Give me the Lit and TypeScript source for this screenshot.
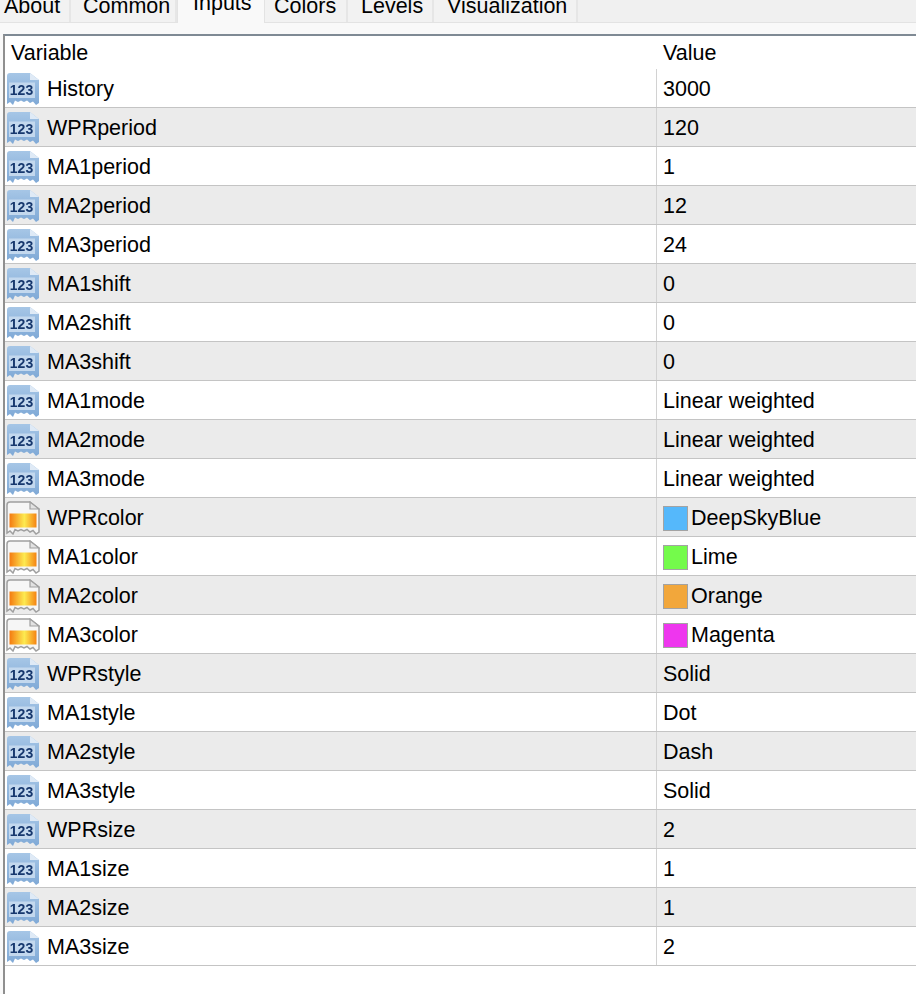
import { LitElement, html, css, svg } from "lit";
import { customElement } from "lit/decorators.js";

type Row = { name: string; value: string; icon?: "num" | "color"; swatch?: string };
const n = (name: string, value: string): Row => ({ name, value, icon: "num" });
const c = (name: string, value: string, swatch: string): Row => ({ name, value, icon: "color", swatch });

const rows: Row[] = [
  n("History", "3000"), n("WPRperiod", "120"), n("MA1period", "1"), n("MA2period", "12"), n("MA3period", "24"),
  n("MA1shift", "0"), n("MA2shift", "0"), n("MA3shift", "0"),
  n("MA1mode", "Linear weighted"), n("MA2mode", "Linear weighted"), n("MA3mode", "Linear weighted"),
  c("WPRcolor", "DeepSkyBlue", "#55b8fb"), c("MA1color", "Lime", "#74fb4b"), c("MA2color", "Orange", "#f2a73b"), c("MA3color", "Magenta", "#ee36ee"),
  n("WPRstyle", "Solid"), n("MA1style", "Dot"), n("MA2style", "Dash"), n("MA3style", "Solid"),
  n("WPRsize", "2"), n("MA1size", "1"), n("MA2size", "1"), n("MA3size", "2"),
];

const tornPage = "M1 4 Q1 1 4 1 H24 L33 8 V31 L30 33 L27 29.5 L24 31 L21 28.5 L18 30 L15 28.5 L12 30 L9 28.5 L7 33 L4 30 L1 32 Z";

const numIcon = svg`<svg class="icon" viewBox="0 0 34 34" width="34" height="34">
  <defs><linearGradient id="b" x1="0" y1="0" x2="0" y2="1"><stop offset="0" stop-color="#a6c6e6"/><stop offset="1" stop-color="#7fa9d6"/></linearGradient></defs>
  <path d="${tornPage}" fill="url(#b)"/>
  <path d="M24 1 V8 H33 Z" fill="#dfeaf6"/>
  <rect x="3" y="10.5" width="26" height="15.5" fill="#c3d8ee"/>
  <text x="15.5" y="23" text-anchor="middle" class="num">123</text>
</svg>`;

const colorIcon = svg`<svg class="icon" viewBox="0 0 34 34" width="34" height="34">
  <defs><linearGradient id="o" x1="0" y1="0" x2="1" y2="0"><stop offset="0" stop-color="#f47a10"/><stop offset=".55" stop-color="#fdea50"/><stop offset="1" stop-color="#f58412"/></linearGradient></defs>
  <path d="${tornPage}" fill="#f6f6f6" stroke="#a0a0a0" stroke-width="1.5"/>
  <path d="M24 1 V8 H33 Z" fill="#e2e2e2" stroke="#a0a0a0" stroke-width="1.2"/>
  <rect x="3.5" y="12.5" width="27" height="14" fill="url(#o)"/>
</svg>`;

@customElement("app-root")
export class AppRoot extends LitElement {
  static styles = css`
    :host { display: block; width: 916px; height: 994px; overflow: hidden; background: #f9f9f9; font-family: "Liberation Sans", Arial, sans-serif; font-size: 21.5px; color: #000; }
    .tabs { display: flex; height: 23px; background: #f0f0f0; border-bottom: 1px solid #e3e3e3; box-sizing: border-box; align-items: flex-end; }
    .tab { height: 22px; flex: none; box-sizing: border-box; line-height: 22px; border-right: 2px solid #e6e6e6; background: #f2f2f2; white-space: nowrap; }
    .tab span { position: relative; top: -5px; display: block; }
    .tab.active { height: 23px; background: #f9f9f9; margin-bottom: -1px; border-left: 1px solid #e3e3e3; border-right: 1px solid #e3e3e3; }
    .tab.active span { top: -8px; }
    .panel { margin: 11px 0 0 3px; background: #fff; border-top: 2px solid #7f8a94; border-left: 2px solid #8f8f8f; height: 960px; box-sizing: border-box; }
    .head, .row { display: grid; grid-template-columns: 652px 1fr; }
    .head { height: 33px; box-sizing: border-box; padding-top: 1px; align-items: center; }
    .head div { padding-left: 6px; }
    .row { height: 39px; box-sizing: border-box; border-bottom: 1px solid #c4c4c4; }
    .row:nth-child(odd) { background: #ebebeb; }
    .row:first-of-type { height: 37px; }
    .cell { display: flex; align-items: center; min-width: 0; padding-top: 2px; }
    .row:first-of-type .cell { padding-top: 1px; }
    .name { gap: 7px; border-right: 1px solid #d2d2d2; }
    .val { padding-left: 6px; }
    .icon { flex: none; width: 34px; height: 34px; margin-left: 1px; filter: blur(.35px); }
    .num { font: bold 14px "Liberation Sans", Arial, sans-serif; fill: #17386e; }
    .swatch { width: 25px; height: 25px; box-sizing: border-box; border: 1px solid #a3a3a3; margin-right: 3px; flex: none; }
  `;

  render() {
    const tabs = [
      { t: "About", w: 71, p: 4 },
      { t: "Common", w: 106, p: 12 },
      { t: "Inputs", w: 88, p: 15 },
      { t: "Colors", w: 83, p: 9 },
      { t: "Levels", w: 86, p: 13 },
      { t: "Visualization", w: 144, p: 13 },
    ];
    return html`
      <div class="tabs">
        ${tabs.map((t) => html`<div class="tab ${t.t === "Inputs" ? "active" : ""}" style="width:${t.w}px;padding-left:${t.p}px"><span>${t.t}</span></div>`)}
      </div>
      <div class="panel">
        <div class="head"><div>Variable</div><div>Value</div></div>
        ${rows.map((r) => html`<div class="row">
          <div class="cell name">${r.icon === "num" ? numIcon : colorIcon}<span>${r.name}</span></div>
          <div class="cell val">${r.swatch ? html`<span class="swatch" style="background:${r.swatch}"></span>` : ""}<span>${r.value}</span></div>
        </div>`)}
      </div>
    `;
  }
}
